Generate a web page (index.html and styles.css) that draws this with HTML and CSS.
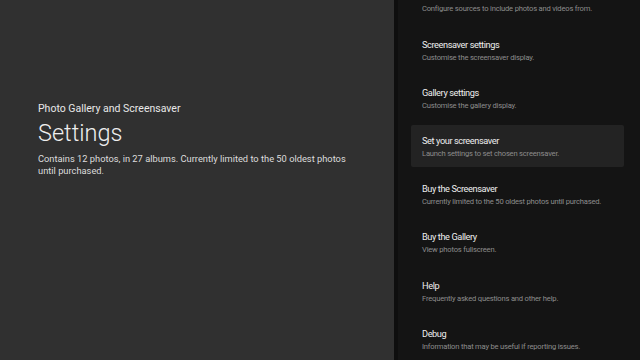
FILE: index.html
```html
<!DOCTYPE html>
<html>
<head>
<meta charset="utf-8">
<link rel="stylesheet" href="styles.css">
</head>
<body>
<div class="screen">
  <section class="guidance">
    <div class="breadcrumb">Photo Gallery and Screensaver</div>
    <h1 class="title">Settings</h1>
    <p class="desc">Contains 12 photos, in 27 albums. Currently limited to the 50 oldest photos until purchased.</p>
  </section>
  <aside class="actions">
    <ul class="list">
      <li class="item"><div class="item-title">Sources</div><div class="item-desc">Configure sources to include photos and videos from.</div></li>
      <li class="item"><div class="item-title">Screensaver settings</div><div class="item-desc">Customise the screensaver display.</div></li>
      <li class="item"><div class="item-title">Gallery settings</div><div class="item-desc">Customise the gallery display.</div></li>
      <li class="item focused"><div class="item-title">Set your screensaver</div><div class="item-desc">Launch settings to set chosen screensaver.</div></li>
      <li class="item"><div class="item-title">Buy the Screensaver</div><div class="item-desc">Currently limited to the 50 oldest photos until purchased.</div></li>
      <li class="item"><div class="item-title">Buy the Gallery</div><div class="item-desc">View photos fullscreen.</div></li>
      <li class="item"><div class="item-title">Help</div><div class="item-desc">Frequently asked questions and other help.</div></li>
      <li class="item"><div class="item-title">Debug</div><div class="item-desc">Information that may be useful if reporting issues.</div></li>
    </ul>
  </aside>
</div>
</body>
</html>
```
FILE: styles.css
```css
* { box-sizing: border-box; }
html, body { margin: 0; padding: 0; }
body {
  width: 640px;
  height: 360px;
  overflow: hidden;
  font-family: Roboto, "Noto Sans", sans-serif;
  background: #141414;
}
.screen {
  display: flex;
  width: 640px;
  height: 360px;
}
.guidance {
  width: 394px;
  flex: none;
  background: #303030;
  padding: 0 40px 81px 38px;
  display: flex;
  flex-direction: column;
  justify-content: center;
}
.breadcrumb {
  font-size: 10.5px;
  color: #e8e8e8;
  line-height: 14px;
}
.title {
  margin: 3px 0 0;
  font-weight: 300;
  font-size: 23.5px;
  line-height: 28px;
  color: #eeeeee;
}
.desc {
  margin: 6px 0 0;
  font-size: 9.3px;
  line-height: 12px;
  color: #dddddd;
}
.actions {
  flex: 1;
  background: #141414;
  border-left: 4px solid #0e0e0e;
  overflow: hidden;
}
.list {
  list-style: none;
  margin: -19.6px 0 0;
  padding: 0 16px 0 13px;
  display: flex;
  flex-direction: column;
  gap: 6.2px;
}
.item {
  height: 42px;
  padding: 9px 11px 0;
  border-radius: 2px;
}
.item.focused {
  background: #232323;
}
.item-title {
  font-size: 9.2px;
  letter-spacing: -0.4px;
  line-height: 13px;
  color: #eeeeee;
}
.item-desc {
  font-size: 7.6px;
  letter-spacing: -0.2px;
  line-height: 13px;
  color: #8c8c8c;
}
```
